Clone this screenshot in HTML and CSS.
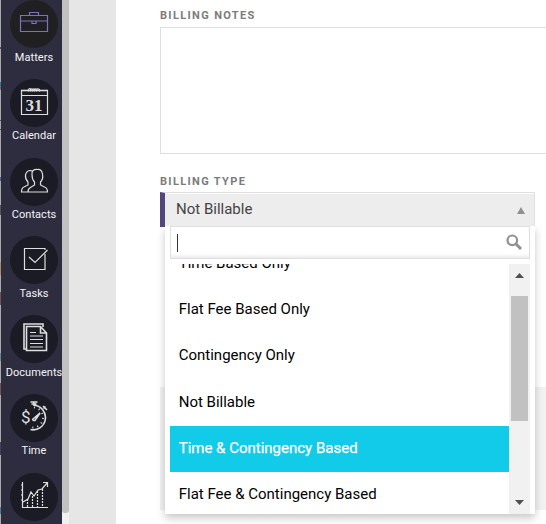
FILE: index.html
```html
<!DOCTYPE html>
<html lang="en">
<head>
<meta charset="utf-8">
<title>Billing</title>
<link rel="stylesheet" href="styles.css">
</head>
<body>
<div class="app">
  <div class="edge"></div>
  <nav class="sidebar">
    <a class="item first"><span class="disc active"><svg width="30" height="30" viewBox="0 0 30 30" class="violet"><path d="M2.500 8.500h27v16h-27zM2.500 14h27M11.500 8.500V5.500h9V8.500M14 14.500v2h4v-2" transform="translate(-1)"/></svg></span><span class="label">Matters</span></a>
    <a class="item"><span class="disc"><svg width="30" height="30" viewBox="0 0 30 30"><path d="M2.500 4.500h26v24h-26zM2.500 9.500h26"/><path class="bold" d="M2 4.500h27"/><path d="M9.500 5.500v-2q1.500-2 2 0v2q0-4 2-2v2q0-4 2-2v2q0-4 2-2v2q0-4 3-2v2"/><text x="15" y="25" class="date">31</text></svg></span><span class="label">Calendar</span></a>
    <a class="item"><span class="disc"><svg width="30" height="30" viewBox="0 -1 30 30"><path transform="translate(0 -1)" d="M9 27h19.500q0-4-3-5l-4-2v-3q3-3 2-8-1-5-5-4.500-6-.5-5.500 5 0 5 2.500 7.500v3l-4 2.500q-2.500 1-2.500 4.500zM8.500 27h-6q0-4 2.500-5l4-2v-3q-3-3-2.500-7 1-4.500 5-4.500l2 .5"/></svg></span><span class="label">Contacts</span></a>
    <a class="item"><span class="disc"><svg width="30" height="30" viewBox="0 0 30 30"><path d="M26 7V5.500H5.500v21h20.500V11M10 14l6 5.500L28.500 7"/></svg></span><span class="label">Tasks</span></a>
    <a class="item"><span class="disc"><svg width="30" height="30" viewBox="0 0 30 30"><path class="bold" d="M7.500 27H5V2h19v3M7.500 4.500h14l6 6.500v17.500h-20zM21.500 4.500V11h6"/><path d="M11 10.500h6M11 14h13M11 17.500h13M11 21.500h13M11 25h13"/></svg></span><span class="label">Documents</span></a>
    <a class="item"><span class="disc"><svg width="30" height="30" viewBox="0 0 30 30"><path class="bold" d="M11.500 28.500a12.300 12.300 0 1 0 3-24.300M11.500 1h7M12.500 3h5M15 1v4M24 5l4 4M24.500 7.500l2-2"/><path class="ticks" d="M15 6.500a10 10 0 0 1-2 20"/><path class="bold" d="M14 18l7-6-5 7.500q-3 0-2-1.500z"/><text x="2" y="22" class="dollar">$</text></svg></span><span class="label">Time</span></a>
    <a class="item"><span class="disc"><svg width="30" height="30" viewBox="0 1 30 30"><path d="M3.500 3v25.500H29M2 6h2M2 11h2M2 16h2M2 21h2M4 23l5-3 3-7 3 4 4-6 4-1 5-6M24 3.500h4.500v4.500"/><path class="dots" d="M8.500 20v8M13.500 17v11M18.500 12v16M23.500 10v18"/></svg></span></a>
  </nav>
  <div class="rail"><div class="rail-thumb"></div></div>
  <div class="gutter"></div>
  <main class="form">
    <div class="caption">BILLING NOTES</div>
    <div class="notes"></div>
    <div class="caption second">BILLING TYPE</div>
    <div class="select"><span>Not Billable</span><svg width="8" height="7"><path d="M4 0L8 7H0z"/></svg>
      <div class="menu">
        <div class="search"><i class="caret"></i><svg width="17" height="17" viewBox="0 0 17 17"><circle cx="6.300" cy="6.300" r="4.800"/><path d="M10 10l5 5"/></svg></div>
        <div class="results">
          <div class="options">
            <div class="option">Time Based Only</div>
            <div class="option">Flat Fee Based Only</div>
            <div class="option">Contingency Only</div>
            <div class="option">Not Billable</div>
            <div class="option chosen">Time &amp; Contingency Based</div>
            <div class="option">Flat Fee &amp; Contingency Based</div>
          </div>
          <div class="bar">
            <svg width="9" height="5"><path d="M4.500 0L9 5H0z"/></svg>
            <div class="thumb"></div>
            <svg class="down" width="9" height="5"><path d="M0 0h9L4.500 5z"/></svg>
          </div>
        </div>
      </div>
    </div>
    <div class="panel"></div>
  </main>
</div>
</body>
</html>
```
FILE: styles.css
```css
* { box-sizing: border-box; }
body { margin: 0; overflow: hidden; font-family: Roboto, sans-serif; background: #fff; }
.app { display: flex; width: 546px; height: 524px; overflow: hidden; }
.edge {
  width: 1px; flex: none;
  background: linear-gradient(#aaa 0 47px, #555 47px 49px, #aaa 49px 82px, #367a9b 82px 88px, #8a6751 88px 90px, #aaa 90px 120px, #555 120px 121px, #aaa 121px 129px, #555 129px 130px, #aaa 130px 177px, #4a6795 177px 181px, #aaa 181px 205px, #555 205px 215px, #aaa 215px 262px, #ad8a62 262px 275px, #aaa 275px 292px, #785056 292px 305px, #aaa 305px 353px, #608b90 353px 361px, #aaa 361px 383px, #785056 383px 395px, #aaa 395px 442px, #414060 442px 455px, #aaa 455px 507px, #4b8090 507px 514px, #aaa 514px);
}
.sidebar { width: 61px; flex: none; background: #2d2d3f; overflow: hidden; }
.item { display: flex; flex-direction: column; align-items: center; width: 66px; height: 78.8px; }
.disc { display: flex; align-items: center; justify-content: center; flex: none; width: 48px; height: 48px; border-radius: 50%; background: #1b1b25; }
.disc.active { background: #202022; }
.disc svg { fill: none; stroke: #dedede; stroke-width: 1.200; margin-top: -4px; }
.disc svg.violet { stroke: #8070c4; }
.disc .bold { stroke-width: 1.600; }
.disc .dots { stroke-dasharray: 2 1; }
.disc .ticks { stroke-width: 2; stroke-dasharray: 1 4; }
.date { font: bold 17px "Liberation Serif", serif; fill: #dedede; stroke: none; text-anchor: middle; }
.dollar { font: 17px Roboto, sans-serif; fill: #dedede; stroke: none; }
.label { margin-top: 2.400px; font-size: 11px; line-height: 14px; letter-spacing: .05px; color: #f4f4f6; white-space: nowrap; }
.first .label { margin-top: 3px; }
.rail { width: 7px; flex: none; background: #f1f1f1; }
.rail-thumb { height: 513px; background: #c1c1c1; border-radius: 0 0 3px 3px; }
.gutter { width: 47px; flex: none; background: #e6e6e6; }
.form { flex: 1; padding: 9px 0 0 44px; min-width: 0; }
.caption { height: 18px; font-size: 11px; font-weight: 700; line-height: 13px; letter-spacing: 1.350px; color: #7b7b7b; }
.notes { height: 127px; border: 1px solid #dfdfdf; border-right: 0; }
.second { margin-top: 21px; height: 17px; }
.select {
  position: relative; display: flex; align-items: center; justify-content: space-between;
  width: 375px; height: 35px; padding: 0 9px 2px 11px; background: #ededed;
  border: 1px solid #dfdfdf; border-left: 5px solid #54457a; border-bottom: 0;
  box-shadow: inset 0 1px #fff; font-size: 15px; letter-spacing: 0; color: #444;
}
.select > svg { fill: #909090; margin-top: 2px; }
.menu {
  position: absolute; left: 0; top: 33px; width: 370px; height: 288px; padding: 0 5px;
  background: #fff; box-shadow: 0 4px 8px rgba(0,0,0,.22); clip-path: inset(0 -15px -20px -15px);
}
.search {
  display: flex; align-items: center; justify-content: space-between; height: 33px; padding: 0 6px 0 6px;
  border: 1px solid #dfdfdf; background: linear-gradient(#fff 85%, #eee 99%);
}
.caret { width: 1px; height: 18px; background: #333; }
.search svg { fill: none; stroke: #909090; stroke-width: 2.200; }
.search path { stroke-width: 3; }
.results { display: flex; height: 250px; margin-top: 5px; overflow: hidden; }
.options { flex: 1; margin-top: -23px; }
.option { height: 46.200px; padding-left: 8.700px; line-height: 45px; color: #000; white-space: nowrap; }
.chosen { background: #11cbe9; color: #fff; -webkit-text-stroke: .25px #fff; }
.bar { display: flex; flex-direction: column; align-items: center; width: 21px; padding-top: 9px; background: #f1f1f1; fill: #505050; }
.thumb { width: 17px; height: 125px; margin-top: 18px; background: #c1c1c1; }
.down { margin-top: 79px; }
.panel { height: 123px; margin-top: 160px; background: #f2f2f2; }
```
